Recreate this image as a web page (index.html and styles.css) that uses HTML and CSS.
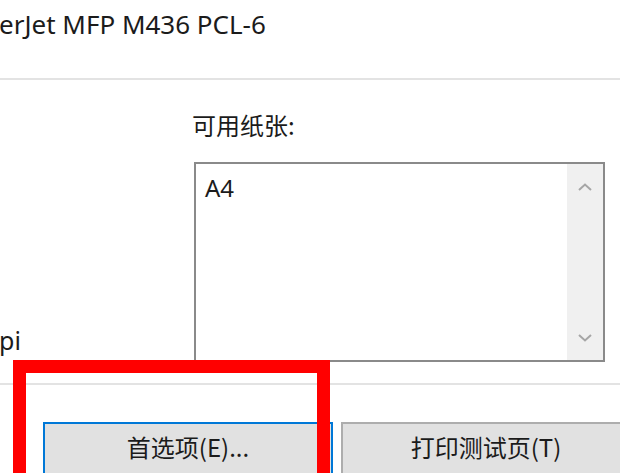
FILE: index.html
```html
<!DOCTYPE html>
<html lang="zh-CN">
<head>
<meta charset="utf-8">
<link rel="stylesheet" href="styles.css">
</head>
<body>
<div class="dialog">
  <div class="title">erJet MFP M436 PCL-6</div>
  <div class="rule"></div>
  <div class="content">
    <div class="left-col">
      <div class="spec">pi</div>
    </div>
    <div class="right-col">
      <div class="label">可用纸张:</div>
      <div class="listbox">
        <div class="list-items">
          <div class="item">A4</div>
        </div>
        <div class="scrollbar">
          <svg class="arrow" width="14" height="8" viewBox="0 0 14 8"><path d="M1 7 L7 1.5 L13 7" fill="none" stroke="#a6a6a6" stroke-width="2"/></svg>
          <svg class="arrow" width="14" height="8" viewBox="0 0 14 8"><path d="M1 1 L7 6.5 L13 1" fill="none" stroke="#a6a6a6" stroke-width="2"/></svg>
        </div>
      </div>
    </div>
  </div>
  <div class="rule"></div>
  <div class="buttons">
    <div class="btn btn-focus">首选项(E)...</div>
    <div class="btn">打印测试页(T)</div>
  </div>
  <div class="highlight"></div>
</div>
</body>
</html>
```

FILE: styles.css
```css
html, body {
  margin: 0;
  padding: 0;
  background: #ffffff;
}
body {
  width: 620px;
  height: 473px;
  overflow: hidden;
  font-family: "Noto Sans", "Noto Sans CJK SC", sans-serif;
  color: #1b1b1b;
}
.dialog {
  position: relative;
  width: 620px;
  height: 473px;
  overflow: hidden;
}
.title {
  height: 78px;
  box-sizing: border-box;
  padding-top: 7px;
  margin-left: -1px;
  font-size: 26px;
  line-height: 34px;
  white-space: nowrap;
}
.rule {
  height: 2px;
  background: #e3e3e3;
}
.content {
  display: flex;
  height: 303px;
}
.left-col {
  width: 194px;
  display: flex;
  flex-direction: column;
  justify-content: flex-end;
}
.spec {
  font-size: 25px;
  line-height: 30px;
  margin-left: -1px;
  margin-bottom: 28px;
}
.right-col {
  flex: 1;
  display: flex;
  flex-direction: column;
  padding-top: 29px;
}
.label {
  font-family: "Noto Sans CJK SC", sans-serif;
  font-size: 24px;
  line-height: 32px;
  margin-left: -2px;
  height: 32px;
}
.listbox {
  margin-top: 21px;
  width: 411px;
  height: 200px;
  box-sizing: border-box;
  border: 2px solid #8a8a8a;
  display: flex;
}
.list-items {
  flex: 1;
  padding: 9px 0 0 9px;
}
.item {
  font-size: 24px;
  line-height: 30px;
}
.scrollbar {
  width: 36px;
  background: #f0f0f0;
  display: flex;
  flex-direction: column;
  justify-content: space-between;
  align-items: center;
  padding: 19px 0 18px;
}
.arrow {
  display: block;
}
.buttons {
  display: flex;
  gap: 8px;
  padding-top: 37px;
  padding-left: 43px;
}
.btn {
  flex: none;
  height: 60px;
  box-sizing: border-box;
  border: 2px solid #adadad;
  background: #e1e1e1;
  font-family: "Noto Sans CJK SC", sans-serif;
  font-size: 24px;
  line-height: 32px;
  padding-top: 7px;
  text-align: center;
  white-space: nowrap;
}
.btn-focus {
  width: 290px;
  border-color: #0078d7;
}
.btn + .btn {
  width: 290px;
}
.highlight {
  position: absolute;
  left: 13px;
  top: 360px;
  width: 317px;
  height: 140px;
  box-sizing: border-box;
  border: 13px solid #ff0000;
}
```
